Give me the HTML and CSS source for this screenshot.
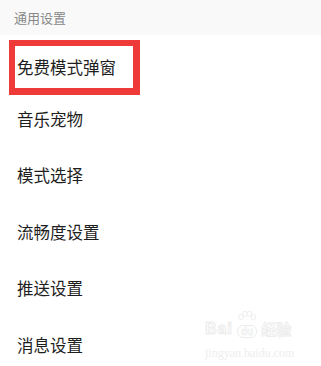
FILE: index.html
```html
<!DOCTYPE html>
<html lang="zh">
<head>
<meta charset="utf-8">
<link rel="stylesheet" href="styles.css">
</head>
<body>
<div class="page">
  <div class="section-head">通用设置</div>
  <ul class="list">
    <li class="row row-first"><span class="mark">免费模式弹窗</span></li>
    <li class="row">音乐宠物</li>
    <li class="row">模式选择</li>
    <li class="row">流畅度设置</li>
    <li class="row">推送设置</li>
    <li class="row">消息设置</li>
  </ul>
  <div class="watermark">
    <div class="wm-top">
      <span class="wm-bai">Bai</span>
      <span class="wm-du">
        <svg class="wm-paw" width="20" height="14" viewBox="0 0 20 14">
          <ellipse cx="4" cy="6" rx="2.2" ry="2.8" fill="none" stroke="#eeeeee" stroke-width="1"/>
          <ellipse cx="8" cy="2.8" rx="2.2" ry="2.6" fill="none" stroke="#eeeeee" stroke-width="1"/>
          <ellipse cx="12.5" cy="2.8" rx="2.2" ry="2.6" fill="none" stroke="#eeeeee" stroke-width="1"/>
          <ellipse cx="16.5" cy="6" rx="2.2" ry="2.8" fill="none" stroke="#eeeeee" stroke-width="1"/>
        </svg>
        <span class="wm-du-text">du</span>
      </span>
      <span class="wm-jy">经验</span>
    </div>
    <div class="wm-url">jingyan.baidu.com</div>
  </div>
</div>
</body>
</html>
```
FILE: styles.css
```css
html, body {
  margin: 0;
  padding: 0;
  background: #ffffff;
}
.page {
  position: relative;
  width: 321px;
  height: 366px;
  overflow: hidden;
  font-family: "Noto Sans CJK SC", "Noto Sans", sans-serif;
}
.section-head {
  height: 35px;
  background: #f9f9f9;
  color: #888888;
  font-size: 13px;
  line-height: 35px;
  padding-left: 14px;
}
.list {
  list-style: none;
  margin: 0;
  padding: 0;
}
.row {
  height: 56.4px;
  line-height: 56.4px;
  padding-left: 17px;
  font-size: 16.5px;
  color: #1e1e1e;
}
.row-first {
  height: 56px;
  padding-left: 9px;
  display: flex;
  align-items: flex-start;
}
.mark {
  box-sizing: border-box;
  width: 131px;
  height: 55px;
  margin-top: 5px;
  border: 6px solid #ef3a3a;
  border-bottom-width: 7px;
  border-right-width: 7px;
  padding-left: 2px;
  line-height: 42px;
  font-size: 16.5px;
}
.watermark {
  position: absolute;
  left: 205px;
  top: 311px;
  color: #f2f2f2;
}
.wm-top {
  display: flex;
  align-items: flex-end;
  gap: 4px;
}
.wm-bai {
  font-family: "Liberation Sans", sans-serif;
  font-weight: bold;
  font-size: 16px;
  line-height: 18px;
  color: #ffffff;
  -webkit-text-stroke: 1px #ececec;
  letter-spacing: 1px;
}
.wm-du {
  position: relative;
  display: flex;
  flex-direction: column;
  align-items: center;
}
.wm-paw {
  display: block;
}
.wm-du-text {
  font-family: "Liberation Sans", sans-serif;
  font-weight: bold;
  font-size: 10px;
  line-height: 11px;
  padding: 0 3px;
  border: 1px solid #ececec;
  border-radius: 6px;
  color: #ffffff;
  -webkit-text-stroke: 0.6px #ececec;
}
.wm-jy {
  font-size: 15px;
  line-height: 18px;
  font-weight: bold;
  color: #ffffff;
  -webkit-text-stroke: 0.8px #ececec;
}
.wm-url {
  font-family: "Liberation Serif", serif;
  font-size: 12px;
  line-height: 14px;
  margin-top: 8px;
  color: #eeeeee;
}
```
